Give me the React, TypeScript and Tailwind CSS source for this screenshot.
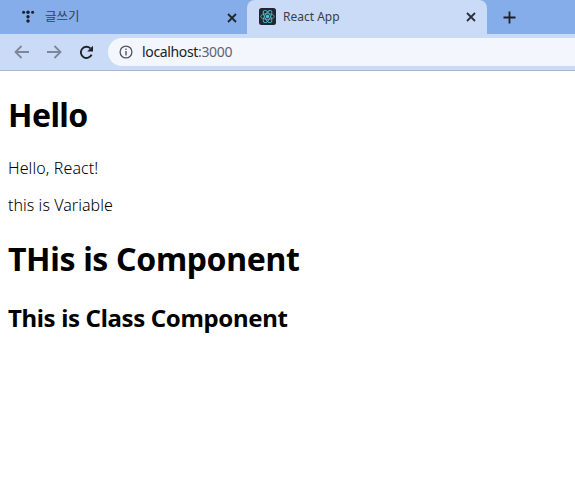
import React from "react";

function Close({ color = "#22262b" }: { color?: string }) {
  return (
    <svg width="10" height="10" viewBox="0 0 10 10" className="shrink-0 mt-[1px]">
      <path d="M1 1 L9 9 M9 1 L1 9" stroke={color} strokeWidth="1.8" fill="none" />
    </svg>
  );
}

function ReactIcon() {
  return (
    <svg width="17" height="17" viewBox="0 0 17 17" className="shrink-0 mt-[1px]">
      <rect width="17" height="17" rx="2.5" fill="#20272d" />
      <circle cx="8.5" cy="8.5" r="1.7" fill="#4fc3dc" />
      <g stroke="#4fb4cc" strokeWidth="0.9" fill="none">
        <ellipse cx="8.5" cy="8.5" rx="6.8" ry="2.8" />
        <ellipse cx="8.5" cy="8.5" rx="6.8" ry="2.8" transform="rotate(60 8.5 8.5)" />
        <ellipse cx="8.5" cy="8.5" rx="6.8" ry="2.8" transform="rotate(120 8.5 8.5)" />
      </g>
    </svg>
  );
}

function DotsLogo() {
  return (
    <svg width="14" height="14" viewBox="0 0 14 14" className="shrink-0">
      <g fill="#18202c">
        <circle cx="2.6" cy="2.3" r="1.5" />
        <circle cx="7" cy="2.3" r="1.7" />
        <circle cx="11.6" cy="2.3" r="1.5" />
        <circle cx="7" cy="6.7" r="1.7" />
        <circle cx="7" cy="11" r="1.7" />
      </g>
    </svg>
  );
}

export default function App() {
  return (
    <div className="w-[575px] h-[488px] overflow-hidden bg-white font-['Noto_Sans','Noto_Sans_CJK_KR',sans-serif]">
      <div className="h-[34px] bg-[#84adea] flex items-start">
        <div className="w-[247px] h-[34px] flex items-center pl-[21px] pr-[10px] rounded-br-[6px]">
          <DotsLogo />
          <span className="ml-[10px] flex-1 text-[12.5px] text-[#333f50] leading-none">글쓰기</span>
          <Close />
        </div>
        <div className="w-[240px] h-[38px] bg-[#c9dbf6] rounded-t-[8px] flex items-center pl-[12px] pr-[11px] pb-[6px]">
          <ReactIcon />
          <span className="ml-[7px] flex-1 text-[12px] text-[#3c4043] leading-none mt-[1px]">React App</span>
          <Close color="#2b3037" />
        </div>
        <div className="ml-[16px] h-[34px] flex items-center">
          <svg width="13" height="13" viewBox="0 0 13 13">
            <path d="M6.5 0.5 V12.5 M0.5 6.5 H12.5" stroke="#1d2127" strokeWidth="1.8" fill="none" />
          </svg>
        </div>
      </div>
      <div className="h-[37px] bg-[#c9dbf6] border-b border-[#aab6cf] flex items-center pl-[14px]">
        <svg width="16" height="14" viewBox="0 0 16 14" className="shrink-0">
          <path d="M15 7 H2 M7.5 1 L1.5 7 L7.5 13" stroke="#7d8797" strokeWidth="1.8" fill="none" />
        </svg>
        <svg width="16" height="14" viewBox="0 0 16 14" className="shrink-0 ml-[16px]">
          <path d="M1 7 H14 M8.5 1 L14.5 7 L8.5 13" stroke="#7d8797" strokeWidth="1.8" fill="none" />
        </svg>
        <svg width="15" height="15" viewBox="0 0 15 15" className="shrink-0 ml-[17px]">
          <path d="M12.6 9.6 A5.6 5.6 0 1 1 11.4 3.4" stroke="#1f2329" strokeWidth="1.9" fill="none" />
          <path d="M14 0.8 V6.6 H8.2 Z" fill="#1f2329" />
        </svg>
        <div className="ml-[14px] flex-1 h-[28px] mb-[1px] bg-[#f3f7fd] rounded-l-[14px] flex items-center pl-[11px]">
          <svg width="14" height="14" viewBox="0 0 14 14" className="shrink-0">
            <circle cx="7" cy="7" r="5.9" stroke="#50555c" strokeWidth="1.3" fill="none" />
            <rect x="6.3" y="6" width="1.4" height="4.4" fill="#50555c" />
            <rect x="6.3" y="3.6" width="1.4" height="1.4" fill="#50555c" />
          </svg>
          <span className="ml-[9px] text-[14px] leading-none text-[#202124] tracking-[-0.35px]">
            localhost<span className="text-[#5f6368]">:3000</span>
          </span>
        </div>
      </div>
      <div className="px-2 text-black">
        <h1 className="text-[32px] font-bold leading-[46px] mt-[21px] tracking-[-0.6px]">Hello</h1>
        <p className="text-[16px] font-light leading-[23px] mt-[19px] tracking-[0.1px]">Hello, React!</p>
        <p className="text-[16px] font-light leading-[23px] mt-[14px] tracking-[0.05px]">this is Variable</p>
        <h1 className="text-[32px] font-bold leading-[46px] mt-[19px] tracking-[-0.35px]">THis is Component</h1>
        <h2 className="text-[24px] font-bold leading-[35px] mt-[18px] tracking-[-0.35px]">This is Class Component</h2>
      </div>
    </div>
  );
}
